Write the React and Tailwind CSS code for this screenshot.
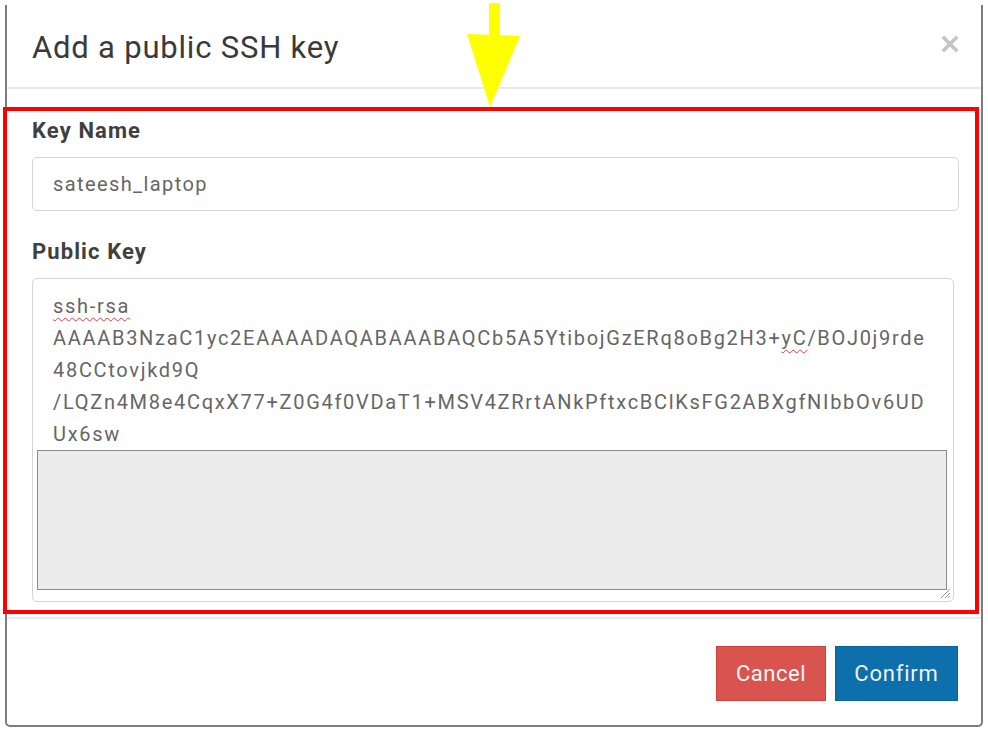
// App.jsx
export default function App() {
  const keyLines = [
    "AAAAB3NzaC1yc2EAAAADAQABAAABAQCb5A5YtibojGzERq8oBg2H3+",
    "48CCtovjkd9Q",
    "/LQZn4M8e4CqxX77+Z0G4f0VDaT1+MSV4ZRrtANkPftxcBClKsFG2ABXgfNIbbOv6UD",
    "Ux6sw",
  ];

  return (
    <div className="relative w-[988px] h-[730px] bg-white font-['Roboto','Liberation_Sans',sans-serif] overflow-hidden">
      {/* modal */}
      <div className="ml-[5px] mt-[5px] w-[978px] h-[722px] border-x-2 border-b-2 border-[#7d7d7d] rounded-b-[5px] flex flex-col bg-white">
        <div className="h-[84px] flex items-center justify-between pl-[25px] pr-[22px] border-b-2 border-[#e8e8e8]">
          <h1 className="mt-[3px] text-[31px] leading-none text-[#3a3a3a] tracking-[0.8px]">Add a public SSH key</h1>
          <svg width="18" height="18" viewBox="0 0 18 18" className="mt-[-4px]">
            <path d="M3 3 L15 15 M15 3 L3 15" stroke="#c4c4c4" strokeWidth="3.5" strokeLinecap="square" />
          </svg>
        </div>

        {/* body */}
        <div className="pl-[25px] pr-[22px] pt-[30px] pb-[15px] border-b-2 border-[#ebebeb]">
          <label className="block text-[22px] leading-[24px] font-bold text-[#404040] tracking-[1.1px]">Key Name</label>
          <div className="mt-[14px] h-[54px] border border-[#d4d4d4] rounded-[5px] flex items-center pl-[20px] text-[20px] text-[#666] tracking-[1.4px]">
            sateesh_laptop
          </div>

          <label className="block mt-[29px] text-[22px] leading-[24px] font-bold text-[#404040] tracking-[1.1px]">Public Key</label>
          <div className="relative mt-[14px] mr-[5px] h-[324px] border border-[#d4d4d4] rounded-[5px] pt-[11px] text-[20px] leading-[32px] text-[#666] tracking-[1.7px]">
            <div className="pl-[20px]">
              <div>
                <span className="underline decoration-wavy decoration-[#e53935] decoration-1 underline-offset-4">ssh-rsa</span>
              </div>
              <div className="whitespace-nowrap">
                {keyLines[0]}
                <span className="underline decoration-wavy decoration-[#e53935] decoration-1 underline-offset-4">yC</span>
                /BOJ0j9rde
              </div>
              {keyLines.slice(1).map((l) => (
                <div key={l} className="whitespace-nowrap">{l}</div>
              ))}
            </div>
            <div className="ml-[4px] mr-[6px] h-[140px] border border-[#8a8a8a] bg-[#ececec]"></div>
            <svg width="12" height="12" viewBox="0 0 12 12" className="absolute right-[2px] bottom-[2px]">
              <path d="M11 2 L2 11 M11 6 L6 11 M11 9 L9 11" stroke="#9a9a9a" strokeWidth="1" />
            </svg>
          </div>
        </div>

        {/* footer */}
        <div className="flex justify-end gap-[9px] pt-[27px] pr-[23px]">
          <button className="w-[110px] h-[55px] bg-[#d9534f] border border-[#d43f3a] text-[22px] text-[#f7f7f7] tracking-[0.5px]">Cancel</button>
          <button className="w-[123px] h-[55px] bg-[#0d6fab] border border-[#0b639a] text-[22px] text-[#f2f2f2] tracking-[0.8px]">Confirm</button>
        </div>
      </div>

      {/* annotation overlays */}
      <div className="absolute left-[3px] top-[107px] w-[976px] h-[507px] border-4 border-[#ff0000] pointer-events-none"></div>
      <svg className="absolute left-0 top-0 pointer-events-none" width="988" height="120">
        <polygon points="489,3 500,3 500,36 489,36" fill="#ffff00" />
        <polygon points="467,34 520,36 490,107" fill="#ffff00" />
      </svg>
    </div>
  );
}
